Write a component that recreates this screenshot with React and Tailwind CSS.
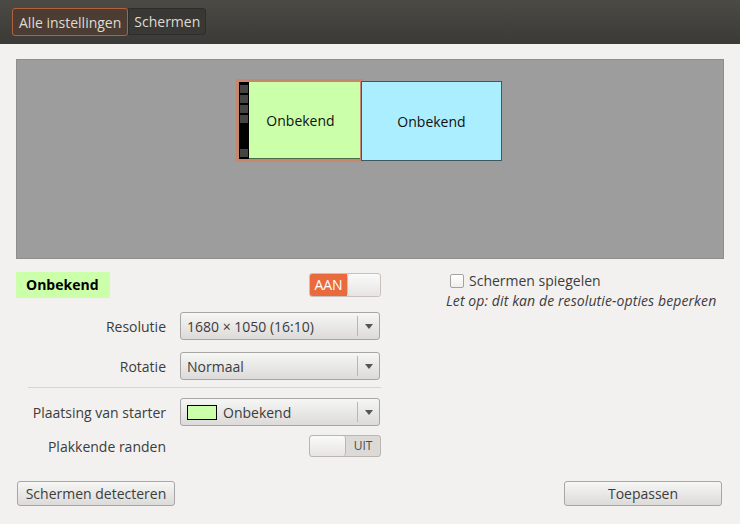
import React from 'react';

const font = { fontFamily: '"Open Sans", "Liberation Sans", sans-serif' };

const Dropdown = ({ children }) => (
    <div className="w-[200px] h-[28px] flex items-center rounded-[3px] border border-[#a7a6a4] bg-gradient-to-b from-[#f6f6f5] to-[#dcdbd9] text-[14px] text-[#3c3c3c]">
        <div className="flex-1 flex items-center gap-[6px] pl-[6px] truncate">{children}</div>
        <div className="w-px h-[20px] bg-[#b8b7b5]"></div>
        <div className="w-[21px] flex justify-center">
            <svg width="8" height="5" viewBox="0 0 8 5"><path d="M0 0h8L4 5z" fill="#555" /></svg>
        </div>
    </div>
);

const Row = ({ label, children, className = '' }) => (
    <div className={`flex items-center ${className}`}>
        <div className="w-[150px] text-right text-[14px] text-[#3c3c3c]">{label}</div>
        <div className="ml-[14px]">{children}</div>
    </div>
);

const Button = ({ children, className = '' }) => (
    <button className={`h-[25px] rounded-[3px] border border-[#a7a6a4] bg-gradient-to-b from-[#f6f6f5] to-[#dcdbd9] text-[14px] text-[#3c3c3c] ${className}`}>
        {children}
    </button>
);

export default function App() {
    return (
        <div className="w-[740px] h-[524px] bg-[#f2f1f0] flex flex-col overflow-hidden" style={font}>
            {/* toolbar */}
            <div className="h-[44px] bg-gradient-to-b from-[#4c4a45] to-[#3b3a36] flex items-start pt-[8px] pl-[12px]">
                <div className="h-[28px] px-[6px] flex items-center border border-[#b5603c] rounded-[3px] bg-[#4b3d34] text-[14px] text-[#dfdbd2]">Alle instellingen</div>
                <div className="h-[27px] px-[5px] flex items-center border border-[#2e2d2a] rounded-r-[3px] bg-[#393834] text-[14px] text-[#dfdbd2]">Schermen</div>
            </div>

            <div className="px-[16px] pt-[15px]">
                {/* monitor canvas */}
                <div className="relative h-[200px] bg-[#9d9d9d] border border-[#8e8e8e]">
                    <div className="absolute left-[219px] top-[19px] w-[127px] h-[83px] bg-[#c6876c] p-[3px]">
                        <div className="flex h-full">
                            <div className="w-[10px] bg-black flex flex-col gap-[2px] pt-[3px] pb-[2px] items-center">
                                <div className="w-[8px] h-[8px] bg-[#444]"></div>
                                <div className="w-[8px] h-[8px] bg-[#444]"></div>
                                <div className="w-[8px] h-[8px] bg-[#444]"></div>
                                <div className="w-[8px] h-[8px] bg-[#444]"></div>
                                <div className="flex-1"></div>
                                <div className="w-[8px] h-[8px] bg-[#444]"></div>
                            </div>
                            <div className="flex-1 bg-[#ccffaa] border-b border-[#4a6a4a] flex items-center justify-center pr-[8px] text-[14px] text-[#111]">Onbekend</div>
                        </div>
                    </div>
                    <div className="absolute left-[344px] top-[21px] w-[141px] h-[80px] bg-[#aaeeff] border border-[#3e5a60] flex items-center justify-center text-[14px] text-[#111]">Onbekend</div>
                </div>

                {/* settings */}
                <div className="flex mt-[12px]">
                    <div className="w-[365px] flex flex-col">
                        <div className="flex items-center justify-between h-[27px]">
                            <div className="w-[94px] h-[26px] bg-[#ccffaa] flex items-center pl-[10px] text-[14px] font-bold text-black">Onbekend</div>
                            <div className="w-[72px] h-[24px] flex rounded-[3px] border border-[#c9c2bc] overflow-hidden">
                                <div className="w-[37px] bg-[#e96a3c] text-white text-[14px] flex items-center justify-center">AAN</div>
                                <div className="flex-1 bg-gradient-to-b from-[#fafafa] to-[#e6e5e3] border-l border-[#c9c2bc] rounded-[3px]"></div>
                            </div>
                        </div>
                        <Row label="Resolutie" className="mt-[14px]"><Dropdown>1680 × 1050 (16:10)</Dropdown></Row>
                        <Row label="Rotatie" className="mt-[12px]"><Dropdown>Normaal</Dropdown></Row>
                        <div className="ml-[12px] mt-[7px] h-px bg-[#d7d5d2]"></div>
                        <Row label="Plaatsing van starter" className="mt-[10px]">
                            <Dropdown>
                                <span className="inline-block w-[30px] h-[15px] bg-[#ccffaa] border border-black"></span>
                                <span>Onbekend</span>
                            </Dropdown>
                        </Row>
                        <div className="flex items-center mt-[9px]">
                            <div className="w-[150px] text-right text-[14px] text-[#3c3c3c]">Plakkende randen</div>
                            <div className="ml-auto w-[72px] h-[22px] flex rounded-[3px] border border-[#b9b6b2] overflow-hidden bg-[#dcdad7]">
                                <div className="w-[36px] bg-gradient-to-b from-[#fafafa] to-[#e6e5e3] border-r border-[#b9b6b2] rounded-[3px]"></div>
                                <div className="flex-1 text-[12px] text-[#4c4c4c] flex items-center justify-center">UIT</div>
                            </div>
                        </div>
                    </div>

                    <div className="ml-[69px] -mt-[1px]">
                        <div className="flex items-center gap-[5px]">
                            <div className="w-[14px] h-[14px] rounded-[2px] border border-[#a5a3a0] bg-gradient-to-b from-white to-[#eeeeee]"></div>
                            <span className="text-[14px] text-[#3c3c3c]">Schermen spiegelen</span>
                        </div>
                        <div className="-mt-[1px] text-[14px] italic text-[#3c3c3c] whitespace-nowrap ml-[-4px] tracking-[0.1px]">Let op: dit kan de resolutie-opties beperken</div>
                    </div>
                </div>

                {/* buttons */}
                <div className="flex justify-between mt-[24px]">
                    <Button className="w-[158px] ml-px">Schermen detecteren</Button>
                    <Button className="w-[158px] mr-[2px]">Toepassen</Button>
                </div>
            </div>
        </div>
    );
}
